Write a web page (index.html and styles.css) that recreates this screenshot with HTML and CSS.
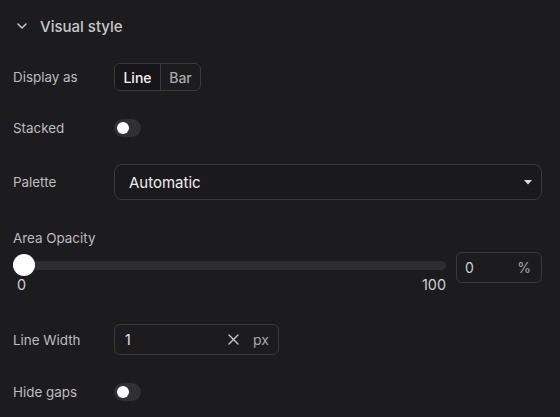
FILE: index.html
```html
<!DOCTYPE html>
<html lang="en">

<head>
    <meta charset="UTF-8">
    <meta name="viewport" content="width=device-width, initial-scale=1.0">
    <title>Visual style</title>
    <link rel="stylesheet" href="styles.css">
</head>

<body>
    <div class="panel">
        <div class="section-header">
            <svg class="chevron" width="10" height="6" viewBox="0 0 10 6">
                <path d="M1 1 L5 5 L9 1" fill="none" stroke="#c8c8c8" stroke-width="1.5" stroke-linecap="round" stroke-linejoin="round"/>
            </svg>
            <span>Visual style</span>
        </div>

        <div class="row row-display">
            <label class="field-label">Display as</label>
            <div class="segmented">
                <button class="segment active">Line</button>
                <button class="segment">Bar</button>
            </div>
        </div>

        <div class="row row-stacked">
            <label class="field-label">Stacked</label>
            <div class="toggle"><span class="knob"></span></div>
        </div>

        <div class="row row-palette">
            <label class="field-label">Palette</label>
            <div class="select">
                <span>Automatic</span>
                <svg width="8" height="5" viewBox="0 0 8 5"><path d="M0 0 H8 L4 4.5 Z" fill="#e0e0e0"/></svg>
            </div>
        </div>

        <div class="opacity-label">Area Opacity</div>
        <div class="slider-row">
            <div class="slider">
                <div class="track"><span class="thumb"></span></div>
                <div class="ticks">
                    <span>0</span>
                    <span>100</span>
                </div>
            </div>
            <div class="number-input">
                <span>0</span>
                <span class="unit">%</span>
            </div>
        </div>

        <div class="row row-width">
            <label class="field-label">Line Width</label>
            <div class="width-input">
                <span class="value">1</span>
                <svg class="clear" width="11" height="11" viewBox="0 0 11 11">
                    <path d="M1 1 L10 10 M10 1 L1 10" stroke="#c8c8c8" stroke-width="1.4" stroke-linecap="round"/>
                </svg>
                <span class="unit">px</span>
            </div>
        </div>

        <div class="row row-gaps">
            <label class="field-label">Hide gaps</label>
            <div class="toggle"><span class="knob"></span></div>
        </div>
    </div>
</body>

</html>
```

FILE: styles.css
```css
body {
    margin: 0;
    background: #1c1c1e;
    font-family: Inter, "Noto Sans", sans-serif;
    color: #c4c4c6;
}

.panel {
    width: 560px;
    height: 417px;
    padding: 0 18px 0 13px;
    box-sizing: border-box;
}

.section-header {
    display: flex;
    align-items: center;
    height: 52px;
    padding-left: 4px;
    font-size: 15px;
    font-weight: 500;
    color: #c8c8ca;
}

.chevron {
    margin-right: 13px;
}

.row {
    display: flex;
    align-items: center;
}

.field-label {
    width: 101px;
    flex-shrink: 0;
    font-size: 13.4px;
    color: #bdbdbf;
}

.row-display {
    margin-top: 11px;
    height: 28px;
}

.segmented {
    display: flex;
    height: 28px;
    border: 1px solid #39393c;
    border-radius: 6px;
    box-sizing: border-box;
    overflow: hidden;
}

.segment {
    background: none;
    border: none;
    width: 39px;
    padding: 0;
    font-family: inherit;
    font-size: 14px;
    font-weight: 500;
    color: #a8a8aa;
}

.segment.active {
    width: 46px;
    background: #161618;
    color: #f2f2f2;
    border-right: 1px solid #39393c;
}

.row-stacked {
    margin-top: 28px;
    height: 18px;
}

.toggle {
    width: 27px;
    height: 18px;
    border-radius: 9px;
    background: #303033;
    display: flex;
    align-items: center;
    padding-left: 3px;
    box-sizing: border-box;
}

.knob {
    width: 12px;
    height: 12px;
    border-radius: 50%;
    background: #fff;
}

.row-palette {
    margin-top: 27px;
    height: 36px;
}

.select {
    flex: 1;
    height: 36px;
    display: flex;
    align-items: center;
    justify-content: space-between;
    padding: 0 9px 0 14px;
    border: 1px solid #39393c;
    border-radius: 8px;
    box-sizing: border-box;
    background: #1a1a1c;
    font-size: 15px;
    color: #ededed;
}

.opacity-label {
    margin-top: 30px;
    height: 16px;
    font-size: 13.4px;
    line-height: 16px;
    color: #bdbdbf;
}

.slider-row {
    display: flex;
    margin-top: 6px;
    gap: 10px;
}

.slider {
    flex: 1;
    padding-top: 9px;
}

.track {
    position: relative;
    height: 9px;
    border-radius: 5px;
    background: #2e2e31;
}

.thumb {
    position: absolute;
    left: 0;
    top: -7px;
    width: 22px;
    height: 22px;
    border-radius: 50%;
    background: #fff;
}

.ticks {
    display: flex;
    justify-content: space-between;
    margin-top: 7px;
    padding-left: 4px;
    font-size: 14.4px;
    line-height: 16px;
    color: #cfcfd1;
}

.number-input {
    width: 86px;
    height: 31px;
    display: flex;
    align-items: center;
    justify-content: space-between;
    padding: 0 10px 0 8px;
    border: 1px solid #39393c;
    border-radius: 6px;
    box-sizing: border-box;
    font-size: 14px;
    color: #cfcfd1;
}

.row-width {
    margin-top: 31px;
    height: 31px;
}

.width-input {
    width: 165px;
    height: 31px;
    display: flex;
    align-items: center;
    padding: 0 9px 0 10px;
    border: 1px solid #39393c;
    border-radius: 6px;
    box-sizing: border-box;
    font-size: 14px;
    color: #e4e4e6;
}

.width-input .value {
    flex: 1;
}

.width-input .clear {
    margin-right: 14px;
}

.unit {
    color: #a8a8aa;
}

.row-gaps {
    margin-top: 28px;
    height: 18px;
}
```
